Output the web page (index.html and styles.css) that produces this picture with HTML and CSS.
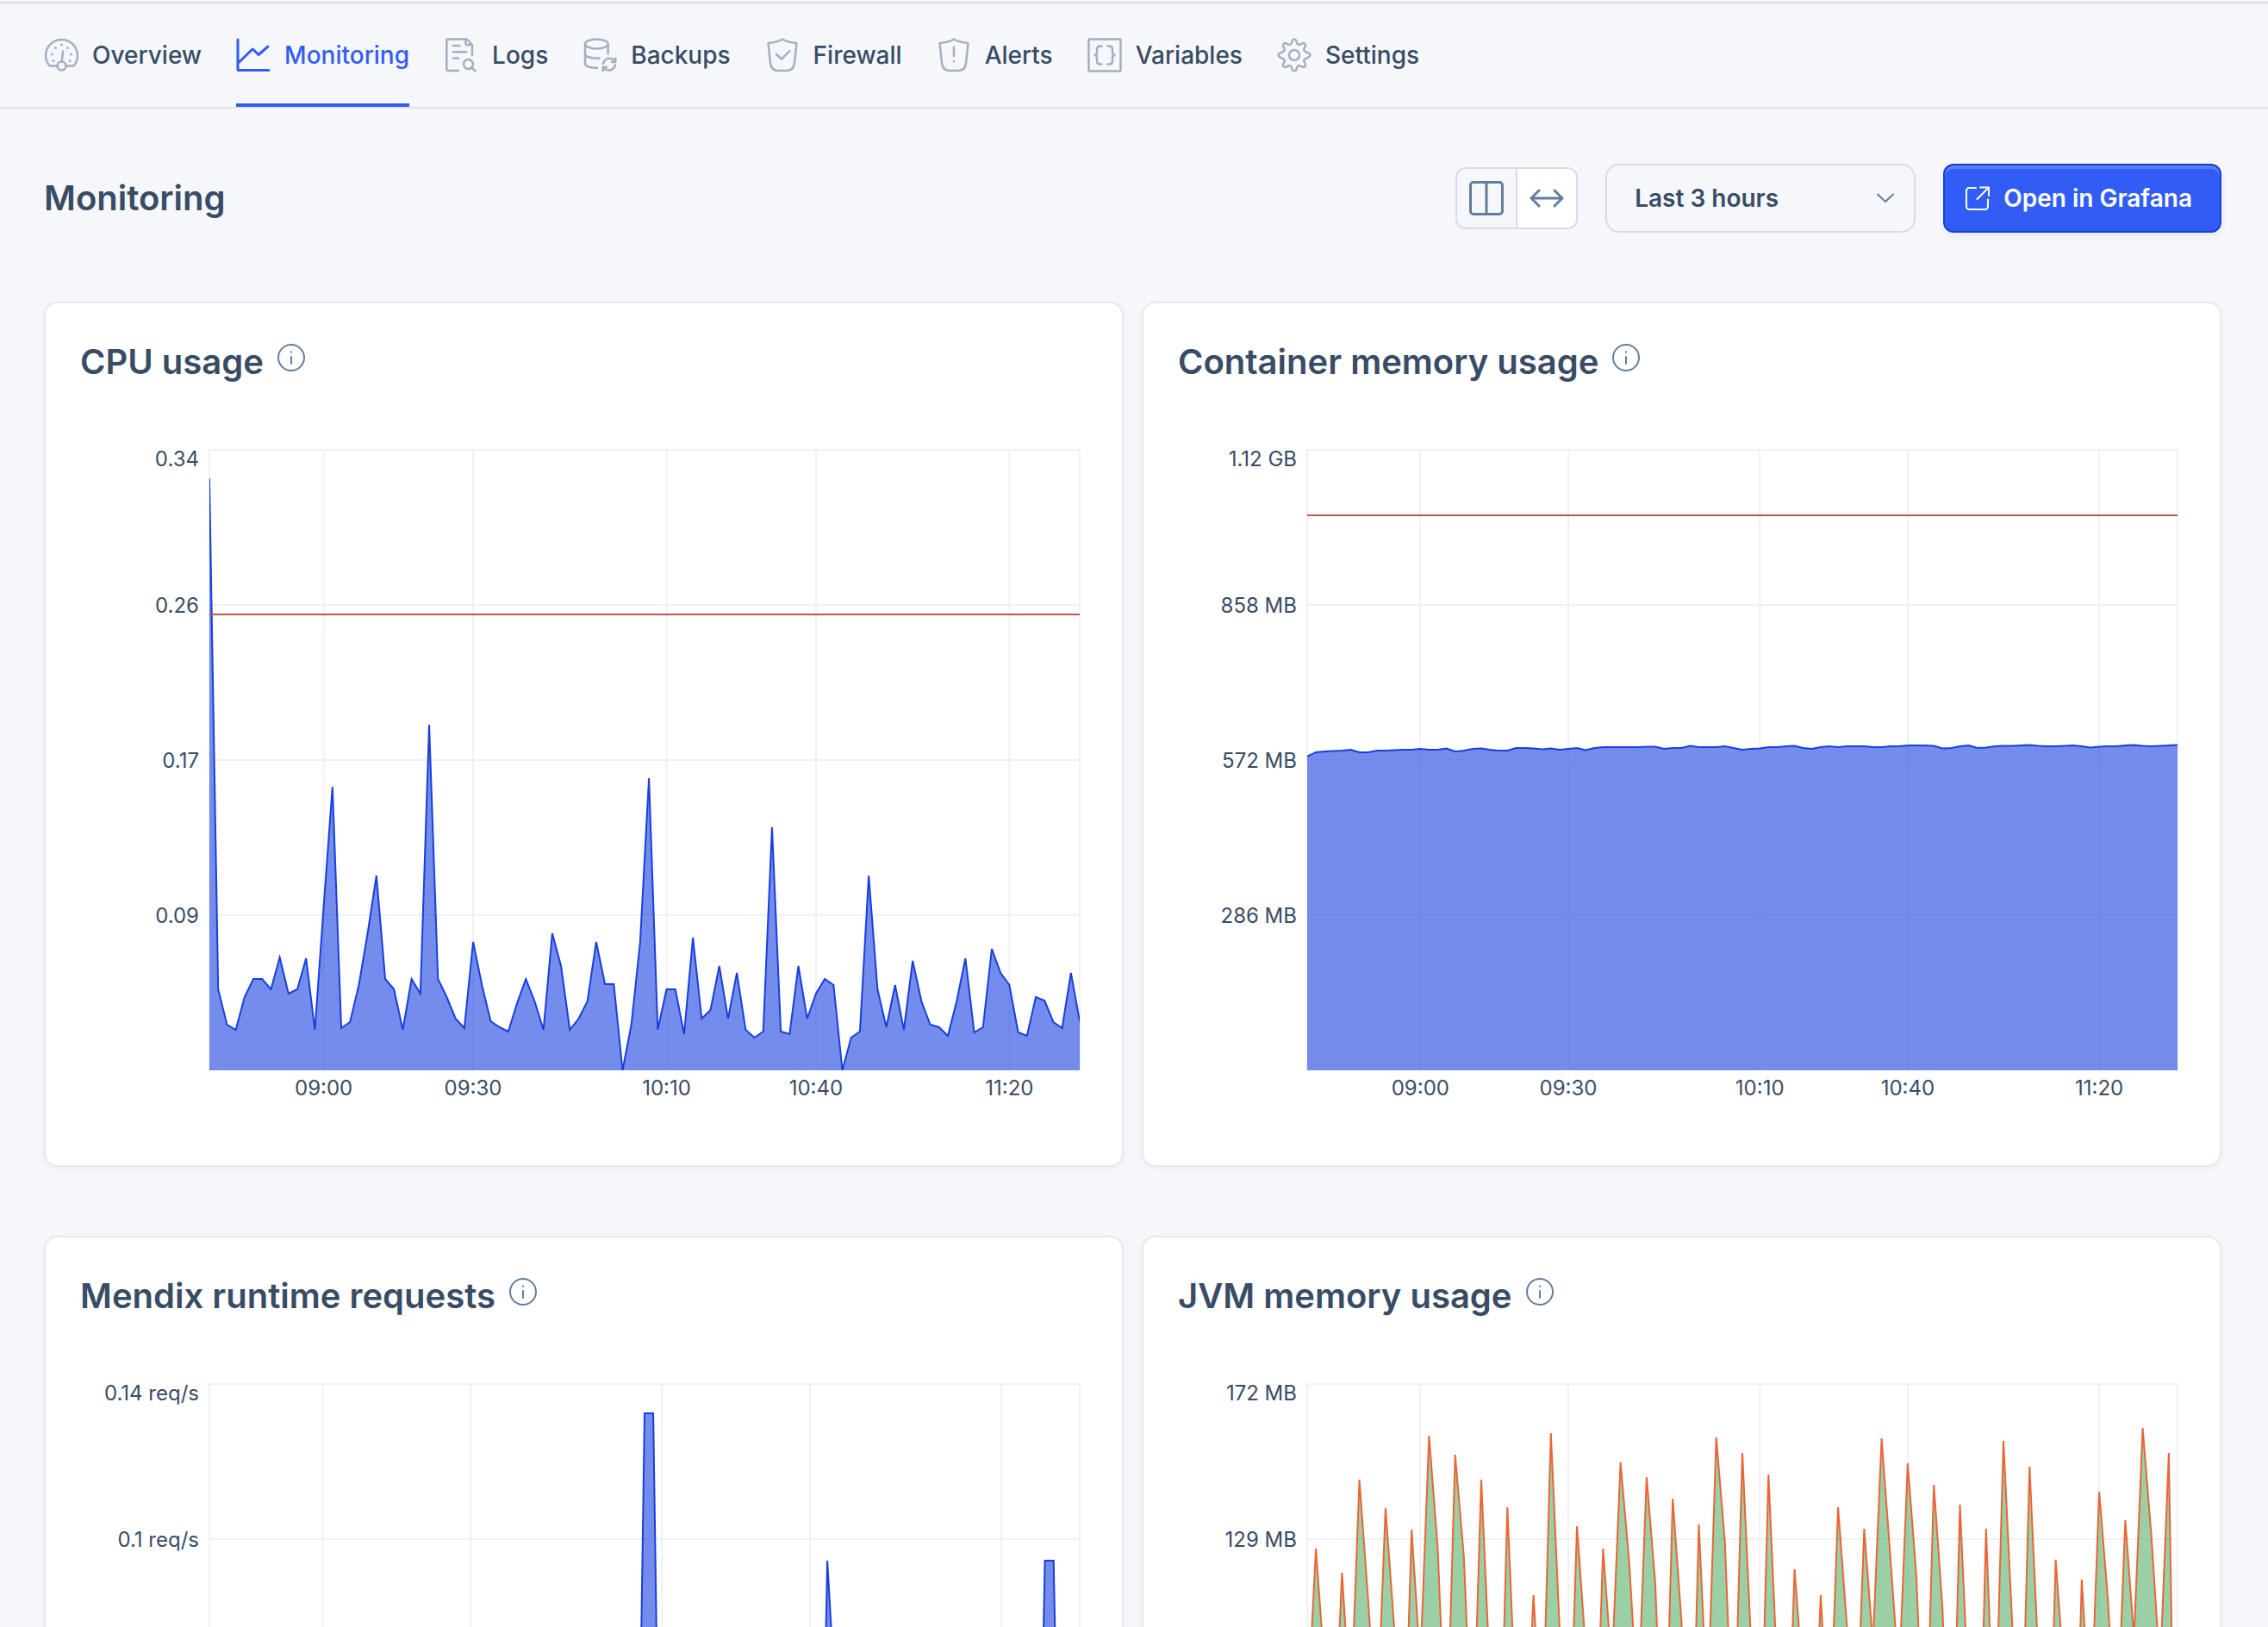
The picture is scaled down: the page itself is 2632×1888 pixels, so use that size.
FILE: index.html
```
<!DOCTYPE html>
<html lang="en">
<head>
<meta charset="utf-8">
<meta name="viewport" content="width=device-width, initial-scale=1">
<title>Monitoring</title>
<link rel="stylesheet" href="styles.css">
</head>
<body>
<svg class="symbols" aria-hidden="true">
  <symbol id="i-info" viewBox="0 0 32 32">
    <circle cx="16" cy="16" r="15"/><path d="M16 15v8"/><path d="M16 9.2v.6"/>
  </symbol>
  <symbol id="i-shield" viewBox="0 0 40 40">
    <path d="M20 1.500c4 2.400 9.500 4 15.200 4.200.8 0 1.300.6 1.200 1.400L34 29c-.6 5.800-3.500 8.800-9 8.900H15c-5.500-.1-8.400-3.100-9-8.900L3.600 7.100c-.1-.8.4-1.400 1.200-1.400C10.500 5.500 16 3.900 20 1.500z"/>
  </symbol>
</svg>
<div class="page">
  <header class="header">
    <nav class="tabs" aria-label="Environment">
      <a class="tab" href="#overview">
        <svg class="icon" viewBox="0 0 40 40"><path d="M16 32.500H6.500C3.500 29 2 25 2 20.500a18.500 18.500 0 0 1 37 0c0 4.500-1.500 8.500-4.500 12H25"/><circle cx="20.500" cy="32.500" r="5"/><path d="M20.700 27.500L22 15.500"/><path class="dots" d="M20.500 8v.1M13.500 11.500v.1M27.500 11.500v.1M9.500 19v.1M31.500 19v.1M11 26.500v.1M30 26.500v.1"/></svg>
        <span>Overview</span>
      </a>
      <a class="tab tab-active" href="#monitoring" aria-current="page">
        <svg class="icon icon-bold" viewBox="0 0 40 40"><path d="M2 2v34.500c0 .8.300 1.100 1.100 1.100H38M2 29.500L18.500 13.500c.5-.5 1-.5 1.400 0l6.100 6L37 10"/></svg>
        <span>Monitoring</span>
      </a>
      <a class="tab" href="#logs">
        <svg class="icon" viewBox="0 0 40 40"><path d="M17 38H4.500A1.200 1.200 0 0 1 3.300 36.800V2.700A1.200 1.200 0 0 1 4.500 1.500H27L33 8v12.300M25.500 1.500V7a1 1 0 0 0 1 1H33M11 9h7.500M11 16.300h15.300M11 23.500h6"/><circle cx="28.500" cy="30.500" r="5.500"/><path d="M32.500 34.500l4.200 4"/></svg>
        <span>Logs</span>
      </a>
      <a class="tab" href="#backups">
        <svg class="icon" viewBox="0 0 40 40"><ellipse cx="16.300" cy="7" rx="13.300" ry="5.500"/><path d="M3 7v22.500c0 3.500 6 5.200 14 5.200M29.600 7v11.300M3 18.500c0 3.400 7 5.200 16.500 5.200M24 30c.8-4 4-6.300 7.500-6.300 2.700 0 4.700 1.200 6.300 3.300M38 31.300c-.8 4-4 6.300-7.500 6.300-2.700 0-4.700-1.200-6.300-3.300M38.300 23.800v4.200h-4.300M23.700 38.300v-4.300H28"/></svg>
        <span>Backups</span>
      </a>
      <a class="tab" href="#firewall">
        <svg class="icon" viewBox="0 0 40 40"><use href="#i-shield"/><path d="M13 19l6 5.700L28.500 15"/></svg>
        <span>Firewall</span>
      </a>
      <a class="tab" href="#alerts">
        <svg class="icon" viewBox="0 0 40 40"><use href="#i-shield"/><path d="M20 10.500v10.500M20 27v.2"/></svg>
        <span>Alerts</span>
      </a>
      <a class="tab" href="#variables">
        <svg class="icon" viewBox="0 0 40 40"><rect x="1.500" y="1.500" width="37" height="37" rx="1"/><path d="M16.500 9.500h-1.500c-2.500 0-4 1.300-4 4v3.500c0 1.500-.8 2.500-2.500 3 1.700.5 2.500 1.500 2.500 3v3.500c0 2.700 1.500 4 4 4h1.500M23.500 9.500h1.500c2.500 0 4 1.300 4 4v3.500c0 1.500.8 2.500 2.500 3-1.700.5-2.500 1.500-2.500 3v3.500c0 2.700-1.500 4-4 4h-1.500"/></svg>
        <span>Variables</span>
      </a>
      <a class="tab" href="#settings">
        <svg class="icon" viewBox="0 0 40 40"><circle cx="20" cy="20" r="6"/><path d="M17.600 3.300c.7-2.300 4.100-2.300 4.800 0l.9 2.800c.5 1.500 2.100 2.200 3.500 1.500l2.600-1.300c2.200-1.100 4.500 1.200 3.400 3.400L31.500 12.300c-.7 1.400 0 3 1.500 3.500l3.700 1.800c2.300.7 2.300 4.100 0 4.800l-3.700 1.800c-1.500.5-2.200 2.100-1.500 3.500l1.300 2.600c1.100 2.200-1.200 4.500-3.400 3.400l-2.600-1.300c-1.400-.7-3 0-3.500 1.500l-.9 2.800c-.7 2.300-4.100 2.300-4.800 0l-.9-2.800c-.5-1.500-2.100-2.200-3.500-1.500l-2.600 1.300c-2.200 1.100-4.500-1.200-3.400-3.400l1.300-2.600c.7-1.400 0-3-1.500-3.500l-3.700-1.800c-2.300-.7-2.300-4.100 0-4.800l3.700-1.800c1.500-.5 2.200-2.100 1.500-3.500L7.200 9.700C6.100 7.500 8.400 5.200 10.600 6.300l2.600 1.300c1.400.7 3 0 3.500-1.500z"/></svg>
        <span>Settings</span>
      </a>
    </nav>
  </header>

  <main class="main">
    <div class="toolbar">
      <h1 class="title">Monitoring</h1>
      <div class="toggle" role="group" aria-label="Layout">
        <button class="toggle-button" type="button" aria-label="Two columns">
          <svg viewBox="0 0 40 40"><rect x="1.500" y="1.500" width="37" height="37" rx="3.500"/><path d="M20 1.500v37"/></svg>
        </button>
        <button class="toggle-button toggle-on" type="button" aria-label="Full width">
          <svg viewBox="0 0 40 40"><path d="M2 20h36M11 11l-9 9 9 9M29 11l9 9-9 9"/></svg>
        </button>
      </div>
      <div class="select">
        <select class="select-input" aria-label="Time range">
          <option>Last 3 hours</option>
        </select>
        <svg class="select-arrow" viewBox="0 0 20 12"><path d="M1 1.500l9 8.500 9-8.500"/></svg>
      </div>
      <button class="button" type="button">
        <svg class="button-icon" viewBox="0 0 28 28"><path d="M12 2H4.500A3.500 3.500 0 0 0 1 5.500v18A3.500 3.500 0 0 0 4.500 27h18a3.500 3.500 0 0 0 3.500-3.500V15.500M17 1.500h10v9.500M27 1.500L13.500 15"/></svg>
        <span>Open in Grafana</span>
      </button>
    </div>

    <div class="cards">
      <section class="card">
        <div class="card-head">
          <h2 class="card-title">CPU usage</h2>
          <svg class="info" role="img" aria-label="Info"><use href="#i-info"/></svg>
        </div>
        <svg class="plot" data-series="cpu">
          <g class="grid"></g>
          <g class="y-labels">
            <text x="-12" y="19">0.34</text><text x="-12" y="189">0.26</text><text x="-12" y="369">0.17</text><text x="-12" y="549">0.09</text>
          </g>
          <g class="x-labels"></g>
        </svg>
      </section>
      <section class="card">
        <div class="card-head">
          <h2 class="card-title">Container memory usage</h2>
          <svg class="info" role="img" aria-label="Info"><use href="#i-info"/></svg>
        </div>
        <svg class="plot" data-series="container">
          <g class="grid"></g>
          <g class="y-labels">
            <text x="-12" y="19">1.12 GB</text><text x="-12" y="189">858 MB</text><text x="-12" y="369">572 MB</text><text x="-12" y="549">286 MB</text>
          </g>
          <g class="x-labels"></g>
        </svg>
      </section>
      <section class="card">
        <div class="card-head">
          <h2 class="card-title">Mendix runtime requests</h2>
          <svg class="info" role="img" aria-label="Info"><use href="#i-info"/></svg>
        </div>
        <svg class="plot" data-series="requests">
          <g class="grid"></g>
          <g class="y-labels">
            <text x="-12" y="19">0.14 req/s</text><text x="-12" y="189">0.1 req/s</text>
          </g>
        </svg>
      </section>
      <section class="card">
        <div class="card-head">
          <h2 class="card-title">JVM memory usage</h2>
          <svg class="info" role="img" aria-label="Info"><use href="#i-info"/></svg>
        </div>
        <svg class="plot plot-green" data-series="jvm">
          <g class="grid"></g>
          <g class="y-labels">
            <text x="-12" y="19">172 MB</text><text x="-12" y="189">129 MB</text>
          </g>
        </svg>
      </section>
    </div>
  </main>
</div>
<script src="charts.js"></script>
</body>
</html>
```
FILE: styles.css
```
* {
  box-sizing: border-box;
}

body {
  margin: 0;
  background: #f6f7fb;
  color: #384c66;
  font-family: Inter, "Liberation Sans", sans-serif;
  font-size: 28px;
  line-height: 40px;
}

svg {
  display: block;
  fill: none;
  stroke-linecap: round;
  stroke-linejoin: round;
}

.symbols {
  position: absolute;
  width: 0;
  height: 0;
}

.page {
  height: 100vh;
  overflow-y: auto;
  scrollbar-width: none;
}

/* Tabs */

.header {
  margin-top: 2px;
  border-top: 2px solid #d6dcec;
  border-bottom: 2px solid #e0e2e8;
}

.tabs {
  display: flex;
  gap: 40px;
  padding: 0 51px;
}

.tab {
  display: flex;
  align-items: center;
  gap: 16px;
  height: 120px;
  border-top: 4px solid transparent;
  border-bottom: 4px solid transparent;
  color: inherit;
  font-weight: 500;
  text-decoration: none;
  white-space: nowrap;
}

.tab-active {
  border-bottom-color: #315df6;
  color: #315df6;
}

.icon {
  width: 40px;
  height: 40px;
  stroke: #a5aebf;
  stroke-width: 2.5;
}

.icon .dots {
  stroke-width: 3;
}

.icon-bold {
  stroke: currentColor;
  stroke-width: 3;
}

/* Toolbar */

.main {
  padding: 64px 54px 80px 51px;
}

.toolbar {
  display: flex;
  align-items: center;
  gap: 32px;
  margin-bottom: 80px;
}

.title {
  flex: 1;
  margin: 0;
  font-size: 40px;
  font-weight: 600;
  line-height: 48px;
}

.toggle {
  display: flex;
  overflow: hidden;
  border: 2px solid #d6dcec;
  border-radius: 12px;
}

.toggle-button {
  display: grid;
  place-items: center;
  width: 68px;
  height: 68px;
  padding: 0;
  border: 0;
  background: transparent;
}

.toggle-button + .toggle-button {
  width: 70px;
  border-left: 2px solid #d6dcec;
}

.toggle-on {
  background: #fff;
}

.toggle-button svg {
  width: 40px;
  height: 40px;
  stroke: #627d9d;
  stroke-width: 3;
}

.select {
  position: relative;
}

.select-input {
  display: block;
  width: 360px;
  height: 80px;
  padding: 0 32px;
  border: 2px solid #d6dcec;
  border-radius: 16px;
  appearance: none;
  background: transparent;
  color: inherit;
  font: inherit;
  font-weight: 600;
}

.select-arrow {
  position: absolute;
  top: 34px;
  right: 25px;
  width: 20px;
  height: 12px;
  pointer-events: none;
  stroke: #627d9d;
  stroke-width: 2;
}

.button {
  display: flex;
  align-items: center;
  gap: 16px;
  height: 80px;
  padding: 0 32px 0 24px;
  border: 2px solid #173fe0;
  border-radius: 12px;
  background: #315df6;
  box-shadow: inset 0 4px 0 #5a7df8, 0 4px 8px rgba(30, 50, 90, 0.06);
  color: #fff;
  font: inherit;
  font-weight: 600;
}

.button-icon {
  width: 28px;
  height: 28px;
  stroke: #fff;
  stroke-width: 2;
}

/* Cards */

.cards {
  display: grid;
  grid-template-columns: 1fr 1fr;
  gap: 80px 21px;
}

.card {
  padding: 44px 49px 110px 40px;
  border: 2px solid #e8e9ed;
  border-radius: 16px;
  background: #fff;
  box-shadow: 0 2px 6px rgba(30, 50, 90, 0.05);
}

.card-head {
  display: flex;
  gap: 16px;
  margin-bottom: 78px;
}

.card-title {
  margin: 0;
  font-size: 40px;
  font-weight: 600;
  line-height: 48px;
}

.info {
  width: 32px;
  height: 38px;
  stroke: #627d9d;
  stroke-width: 2;
}

/* Charts */

.plot {
  width: calc(100% - 150px);
  height: 720px;
  margin-left: 150px;
  overflow: visible;
  stroke-linecap: butt;
}

.plot text {
  fill: #384c66;
  font-size: 24px;
}

.y-labels {
  text-anchor: end;
}

.x-labels {
  text-anchor: middle;
}

.grid {
  stroke: #f0f1f6;
  stroke-width: 2;
}

.area {
  fill: #183fde;
  fill-opacity: 0.6;
}

.line {
  stroke: #183fde;
  stroke-width: 2;
  stroke-linejoin: miter;
  vector-effect: non-scaling-stroke;
}

.plot-green .area {
  fill: #58af6b;
}

.plot-green .line {
  stroke: #ea6537;
}

.limit {
  stroke: #c05550;
  stroke-width: 2;
}
```
FILE: charts.js
```
// Each value is a height on a 0-720 scale, at even time steps.
const series = {
  cpu: {
    limit: 191,
    values: [686, 94, 53, 47, 85, 106, 106, 94, 131, 89, 94, 130, 47, 190, 329, 49, 56, 99, 159, 226,
      106, 94, 47, 106, 89, 401, 106, 85, 60, 49, 149, 99, 57, 50, 45, 78, 106, 80, 47, 159,
      121, 47, 60, 80, 149, 100, 100, 0, 53, 149, 339, 47, 94, 94, 42, 154, 60, 70, 121, 60,
      113, 47, 38, 45, 282, 45, 42, 121, 60, 89, 106, 99, 0, 38, 45, 226, 94, 50, 99, 47,
      127, 80, 53, 50, 40, 80, 130, 44, 50, 141, 113, 99, 44, 40, 85, 81, 56, 49, 113, 57]
  },
  container: {
    limit: 76,
    values: [364.5, 369, 370, 370.5, 371, 372, 369, 369, 371, 371, 371.5, 372, 372, 373, 372, 372, 373.5, 370, 371, 373,
      373.5, 372, 371, 371, 374, 374, 373.5, 372.5, 373.5, 372, 373, 374, 371.5, 374, 375, 375, 375, 375, 375, 375.5,
      375.5, 373, 374, 374, 376.5, 375, 375, 375, 376, 374, 372, 373, 373.5, 375, 375, 376, 376.5, 374, 373, 375,
      376, 375, 376, 376, 376, 375, 375, 376, 376, 377, 377, 377, 376.5, 373.5, 374, 376, 377, 374, 374.5, 376,
      376.5, 376.5, 377, 377.5, 376.5, 376, 376, 376.5, 377, 376, 374.5, 375.5, 376, 376, 377, 377.5, 376.5, 376, 376.5, 377, 377.5]
  },
  requests: {
    values: Array.from({ length: 101 }, (_, i) => ({ 50: 686, 51: 686, 71: 515, 72: 340, 96: 515, 97: 515 })[i] || 0)
  },
  jvm: {
    values: [330, 529, 389, 270, 501, 340, 609, 470, 315, 576, 437, 220, 551, 395, 660, 529, 280, 638, 520, 275,
      609, 381, 200, 577, 337, 258, 475, 300, 663, 436, 243, 555, 412, 230, 529, 388, 629, 513, 344, 612,
      488, 215, 587, 445, 170, 557, 340, 658, 536, 272, 640, 420, 230, 615, 387, 205, 505, 370, 215, 475,
      298, 577, 441, 283, 552, 418, 657, 520, 378, 628, 496, 240, 603, 459, 180, 580, 357, 150, 552, 285,
      654, 443, 248, 624, 405, 150, 516, 378, 150, 493, 318, 595, 470, 300, 562, 425, 669, 543, 388, 640, 0]
  }
};

const ticks = [[13, "09:00"], [30, "09:30"], [52, "10:10"], [69, "10:40"], [91, "11:20"]];
const svgNs = "http://www.w3.org/2000/svg";

function add(parent, name, attributes, text) {
  const node = document.createElementNS(svgNs, name);
  for (const key in attributes) node.setAttribute(key, attributes[key]);
  if (text) node.textContent = text;
  parent.append(node);
  return node;
}

document.querySelectorAll(".plot").forEach((plot) => {
  const { values, limit } = series[plot.dataset.series];
  const steps = values.length - 1;
  const grid = plot.querySelector(".grid");
  const labels = plot.querySelector(".x-labels");

  [0, 25, 50, 75].forEach((y) => add(grid, "line", { x1: 0, x2: "100%", y1: y + "%", y2: y + "%" }));
  [0, 100].forEach((x) => add(grid, "line", { x1: x + "%", x2: x + "%", y1: 0, y2: "100%" }));
  ticks.forEach(([step, label]) => {
    const x = (step / steps) * 100 + "%";
    add(grid, "line", { x1: x, x2: x, y1: 0, y2: "100%" });
    if (labels) add(labels, "text", { x, y: 749 }, label);
  });

  const points = values.map((value, i) => `${i},${720 - value}`).join(" ");
  const data = add(plot, "svg", { viewBox: `0 0 ${steps} 720`, preserveAspectRatio: "none", width: "100%", height: "100%" });
  add(data, "polygon", { class: "area", points: `0,720 ${points} ${steps},720` });
  add(data, "polyline", { class: "line", points });

  if (limit) add(plot, "line", { class: "limit", x1: 0, x2: "100%", y1: limit, y2: limit });
});
```
